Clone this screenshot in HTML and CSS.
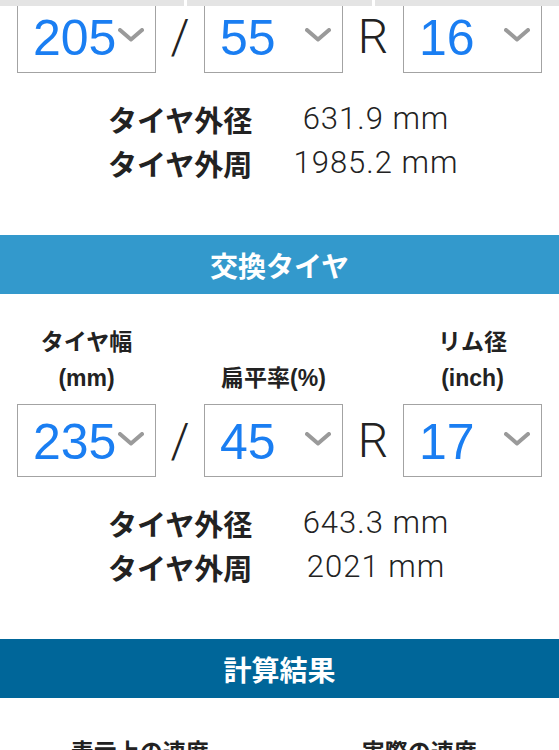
FILE: index.html
```html
<!DOCTYPE html>
<html lang="ja">
<head>
<meta charset="utf-8">
<title>タイヤサイズ計算</title>
<link rel="stylesheet" href="styles.css">
</head>
<body>
<div class="topbar"><span></span><span></span><span></span></div>

<section class="tire tire-current">
  <div class="sizes">
    <div class="select"><span class="val">205</span><svg class="chev" viewBox="0 0 26 14" width="26" height="14"><polyline points="2,2 13,11.5 24,2"/></svg></div>
    <span class="sep sep-slash">/</span>
    <div class="select"><span class="val">55</span><svg class="chev" viewBox="0 0 26 14" width="26" height="14"><polyline points="2,2 13,11.5 24,2"/></svg></div>
    <span class="sep sep-r">R</span>
    <div class="select"><span class="val">16</span><svg class="chev" viewBox="0 0 26 14" width="26" height="14"><polyline points="2,2 13,11.5 24,2"/></svg></div>
  </div>
  <dl class="result">
    <dt>タイヤ外径</dt><dd>631.9 mm</dd>
    <dt>タイヤ外周</dt><dd>1985.2 mm</dd>
  </dl>
</section>

<h2 class="band band-light">交換タイヤ</h2>

<section class="tire tire-new">
  <div class="labels">
    <div class="lab">タイヤ幅<br>(mm)</div>
    <span class="sep sep-slash"></span>
    <div class="lab">扁平率(%)</div>
    <span class="sep sep-r"></span>
    <div class="lab">リム径<br>(inch)</div>
  </div>
  <div class="sizes">
    <div class="select"><span class="val">235</span><svg class="chev" viewBox="0 0 26 14" width="26" height="14"><polyline points="2,2 13,11.5 24,2"/></svg></div>
    <span class="sep sep-slash">/</span>
    <div class="select"><span class="val">45</span><svg class="chev" viewBox="0 0 26 14" width="26" height="14"><polyline points="2,2 13,11.5 24,2"/></svg></div>
    <span class="sep sep-r">R</span>
    <div class="select"><span class="val">17</span><svg class="chev" viewBox="0 0 26 14" width="26" height="14"><polyline points="2,2 13,11.5 24,2"/></svg></div>
  </div>
  <dl class="result">
    <dt>タイヤ外径</dt><dd>643.3 mm</dd>
    <dt>タイヤ外周</dt><dd>2021 mm</dd>
  </dl>
</section>

<h2 class="band band-dark">計算結果</h2>

<div class="speeds">
  <div class="speed-label">表示上の速度</div>
  <div class="speed-label">実際の速度</div>
</div>
</body>
</html>
```

FILE: styles.css
```css
html, body {
  margin: 0;
  padding: 0;
  background: #ffffff;
}

body {
  font-family: "Liberation Sans", "Noto Sans CJK JP", sans-serif;
  color: #222222;
}

.topbar {
  position: fixed;
  top: 0;
  left: 0;
  right: 0;
  height: 6px;
  display: flex;
  gap: 3px;
  z-index: 10;
}

.topbar span {
  flex: 1;
  background: #e4e4e4;
}

.sizes,
.labels {
  display: flex;
  padding: 0 17px;
}

.labels {
  align-items: flex-end;
  margin-bottom: 8px;
}

.select {
  flex: 0 0 139px;
  box-sizing: border-box;
  height: 73px;
  border: 1px solid #a3a3a3;
  background: #ffffff;
  display: flex;
  align-items: center;
  justify-content: space-between;
  padding: 0 11px 0 15px;
}

.val {
  font-family: "Liberation Sans", sans-serif;
  font-weight: 400;
  font-size: 50px;
  line-height: 1;
  color: #1a7ef2;
  padding-top: 3px;
}

.chev {
  flex: 0 0 auto;
  margin-top: -3px;
}

.chev polyline {
  fill: none;
  stroke: #9a9a9a;
  stroke-width: 4;
  stroke-linejoin: round;
  stroke-linecap: round;
}

.sep {
  display: flex;
  align-items: center;
  justify-content: center;
  font-family: "Roboto", "Liberation Sans", sans-serif;
  font-size: 48px;
  color: #222222;
  font-weight: 300;
}

.sep-slash {
  flex: 0 0 48px;
}

.sep-r {
  flex: 0 0 60px;
}

.lab {
  flex: 0 0 139px;
  text-align: center;
  font-family: "Liberation Sans", "Noto Sans CJK JP", sans-serif;
  font-weight: 700;
  font-size: 23px;
  line-height: 36px;
  color: #222222;
}

.result {
  display: grid;
  grid-template-columns: 178px 180px;
  margin: 24px 0 50px 108px;
  line-height: 44px;
}

.result dt {
  font-family: "Noto Sans CJK JP", sans-serif;
  font-weight: 700;
  font-size: 29px;
  margin: 0;
}

.result dd {
  margin: 0;
  text-align: center;
  font-family: "Roboto", "Liberation Sans", sans-serif;
  font-weight: 300;
  font-size: 31px;
  letter-spacing: 1px;
  white-space: nowrap;
}

.band {
  margin: 0;
  height: 59px;
  display: flex;
  align-items: center;
  justify-content: center;
  color: #ffffff;
  font-family: "Noto Sans CJK JP", sans-serif;
  font-weight: 700;
  font-size: 28px;
}

.band-light {
  background: #3399cc;
}

.band-dark {
  background: #006699;
}

.tire-new {
  padding-top: 30px;
}

.speeds {
  display: grid;
  grid-template-columns: 1fr 1fr;
  padding-top: 34px;
}

.speed-label {
  text-align: center;
  font-family: "Noto Sans CJK JP", sans-serif;
  font-weight: 700;
  font-size: 23px;
  line-height: 36px;
}
```
